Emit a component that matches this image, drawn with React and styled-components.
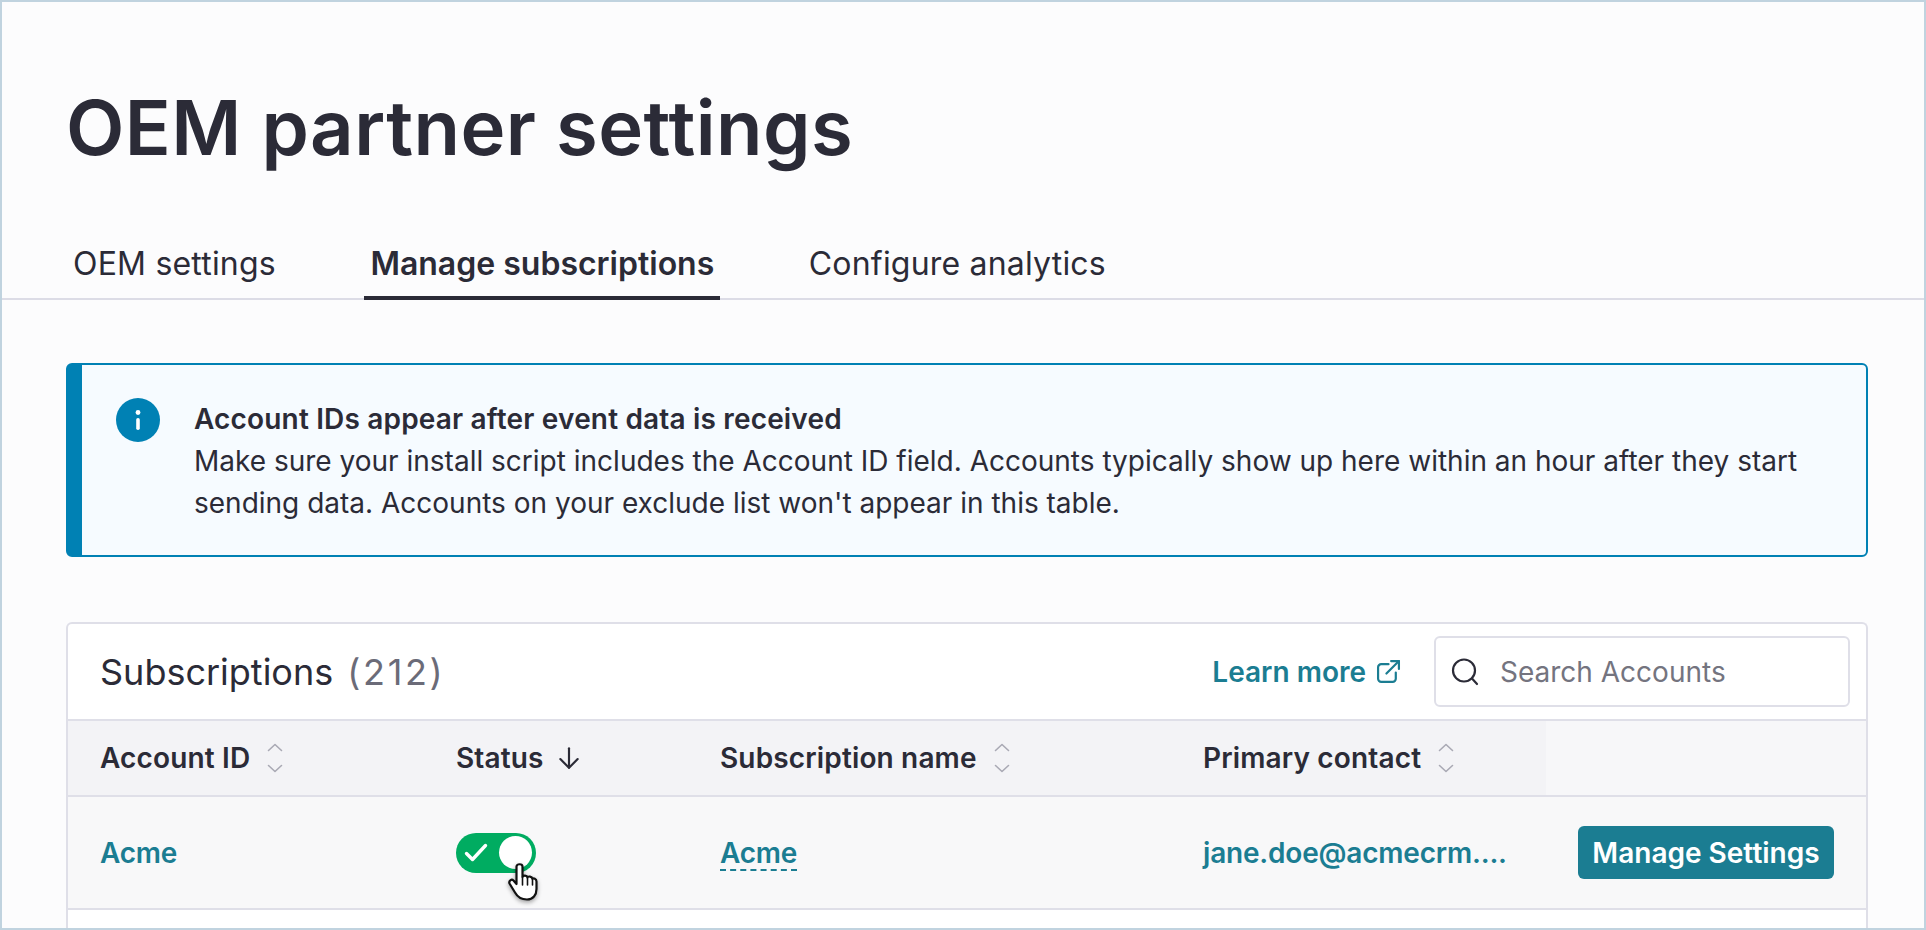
import styled, { createGlobalStyle } from 'styled-components'

const Global = createGlobalStyle`
html, body {
  margin: 0;
  padding: 0;
  background: #fff;
}
* {
  box-sizing: border-box;
}
`

function SortIcon() {
  return (
    <SortSvg width="18" height="32" viewBox="0 0 18 32" fill="none" stroke="#a9a9b4" strokeWidth="1.6" strokeLinecap="round" strokeLinejoin="round">
      <path d="M2.5 8.5 9 2.5l6.5 6" />
      <path d="M2.5 23.5 9 29.5l6.5-6" />
    </SortSvg>
  )
}

function HandCursor() {
  return (
    <Cursor width="30" height="38" viewBox="0 0 30 38">
      <path
        d="M8.500 3.500C8.500.5 14.500.5 14.500 3.500V14C15 12 19 12 19.500 14.500 20 13 24 13 24.500 16 25.500 15 28.500 15.500 28.500 18.500V26C28.500 32 25 36.500 19 36.500 13 36.500 9.500 34 7 29.500L1.500 20.500C.5 18 3.500 15.500 5.500 17.500L8.500 21Z"
        fill="#fff"
        stroke="#111"
        strokeWidth="2.200"
        strokeLinejoin="round"
      />
      <path d="M14.500 14v8M19.500 15v7M24.500 17v5" stroke="#111" strokeWidth="1.600" strokeLinecap="round" />
    </Cursor>
  )
}

const columns = [
  { label: 'Account ID', sort: true },
  { label: 'Status', arrow: true },
  { label: 'Subscription name', sort: true },
  { label: 'Primary contact', sort: true },
]

function App() {
  return (
    <Frame>
      <Global />
      <Title>OEM partner settings</Title>

      <Tabs>
        <Tab>OEM settings</Tab>
        <Tab $active>Manage subscriptions</Tab>
        <Tab>Configure analytics</Tab>
      </Tabs>

      <Content>
        <Banner>
          <InfoIcon width="44" height="44" viewBox="0 0 44 44">
            <circle cx="22" cy="22" r="22" fill="#0081b4" />
            <circle cx="22" cy="14.500" r="2.400" fill="#fff" />
            <rect x="20.200" y="20" width="3.600" height="12" rx="1.800" fill="#fff" />
          </InfoIcon>
          <BannerText>
            <BannerHeading>Account IDs appear after event data is received</BannerHeading>
            <BannerBody>
              Make sure your install script includes the Account ID field. Accounts typically show up here within an hour after they start
              sending data. Accounts on your exclude list won't appear in this table.
            </BannerBody>
          </BannerText>
        </Banner>

        <Card>
          <CardHeader>
            <CardTitle>
              Subscriptions <Count>(212)</Count>
            </CardTitle>
            <LearnMore>
              Learn more
              <svg width="25" height="25" viewBox="0 0 24 24" fill="none" stroke="#1b7d92" strokeWidth="2.100" strokeLinecap="round" strokeLinejoin="round">
                <path d="M12 5H5a3 3 0 0 0-3 3v11a3 3 0 0 0 3 3h11a3 3 0 0 0 3-3v-6" />
                <path d="M10 14 22 2" />
                <path d="M14.500 2H22v7.500" />
              </svg>
            </LearnMore>
            <Search>
              <svg width="28" height="28" viewBox="0 0 28 28" fill="none" stroke="#2b2b37" strokeWidth="2.200" strokeLinecap="round">
                <circle cx="13" cy="12.500" r="11" />
                <path d="m21 20.500 5 5.500" />
              </svg>
              <SearchInput placeholder="Search Accounts" />
            </Search>
          </CardHeader>

          <HeadRow>
            {columns.map((c) => (
              <HeadCell key={c.label}>
                {c.label}
                {c.sort && <SortIcon />}
                {c.arrow && (
                  <ArrowSvg width="26" height="26" viewBox="0 0 24 24" fill="none" stroke="#2b2b37" strokeWidth="2" strokeLinecap="round" strokeLinejoin="round">
                    <path d="M12 3v18" />
                    <path d="m4 13 8 8 8-8" />
                  </ArrowSvg>
                )}
              </HeadCell>
            ))}
            <ActionsHead />
          </HeadRow>

          <Row>
            <Cell>
              <RowLink>Acme</RowLink>
            </Cell>
            <Cell>
              <Toggle>
                <svg width="26" height="22" viewBox="0 0 26 22" fill="none" stroke="#fff" strokeWidth="3.400" strokeLinecap="round" strokeLinejoin="round">
                  <path d="m3.500 11.500 6 6 13-14" />
                </svg>
                <Knob />
                <HandCursor />
              </Toggle>
            </Cell>
            <Cell>
              <DashedLink>Acme</DashedLink>
            </Cell>
            <Cell>
              <RowLink>jane.doe@acmecrm....</RowLink>
            </Cell>
            <ActionCell>
              <Button>Manage Settings</Button>
            </ActionCell>
          </Row>
        </Card>
      </Content>
    </Frame>
  )
}

const Frame = styled.div`
height: 930px;
overflow: hidden;
border: 2px solid #c0d3df;
background: #fcfcfd;
font-family: Inter, "Liberation Sans", sans-serif;
color: #2b2b37;
`

const Title = styled.h1`
margin: 0;
padding: 80px 0 0 64px;
height: 222px;
font-size: 76px;
line-height: 90px;
font-weight: 600;
letter-spacing: 0.45px;
`

const Tabs = styled.div`
display: flex;
height: 76px;
padding-left: 65px;
gap: 82.5px;
border-bottom: 2px solid #dcdce6;
`

const Tab = styled.div`
height: 76px;
padding: 18px 6px 0;
font-size: 32px;
line-height: 44px;
font-weight: ${(p) => (p.$active ? 600 : 400)};
letter-spacing: ${(p) => (p.$active ? 0 : '0.2px')};
border-bottom: ${(p) => (p.$active ? '4px solid #2b2b37' : 'none')};
`

const Content = styled.div`
padding: 63px 56px 0 64px;
`

const Banner = styled.div`
display: flex;
height: 194px;
padding: 33px 32px 0 34px;
gap: 34px;
background: #f6fbff;
border: 2px solid #0081b4;
border-left-width: 16px;
border-radius: 6px;
`

const InfoIcon = styled.svg`
flex: none;
`

const BannerText = styled.div`
font-size: 28px;
line-height: 42px;
`

const BannerHeading = styled.div`
font-weight: 600;
letter-spacing: 0.17px;
`

const BannerBody = styled.div`
font-weight: 400;
`

const Card = styled.div`
margin-top: 65px;
height: 400px;
background: #fff;
border: 2px solid #dfdfe8;
border-bottom: none;
border-radius: 6px 6px 0 0;
`

const CardHeader = styled.div`
display: flex;
align-items: center;
height: 95px;
padding: 0 16px 0 32px;
`

const CardTitle = styled.div`
flex: 1;
font-size: 36px;
font-weight: 400;
`

const Count = styled.span`
margin-left: 4px;
color: #6b6b78;
letter-spacing: 2.6px;
`

const LearnMore = styled.a`
display: flex;
align-items: center;
gap: 10px;
margin-right: 33px;
font-size: 28px;
font-weight: 600;
color: #1b7d92;
`

const Search = styled.div`
display: flex;
align-items: center;
gap: 21px;
width: 416px;
height: 71px;
padding: 0 15px;
background: #fff;
border: 2px solid #dfdfe8;
border-radius: 6px;
`

const SearchInput = styled.input`
flex: 1;
min-width: 0;
padding: 0;
border: none;
outline: none;
background: transparent;
font: 400 28px Inter, "Liberation Sans", sans-serif;

&::placeholder {
  color: #74747f;
  opacity: 1;
}
`

const grid = `
display: grid;
grid-template-columns: 356px 264px 483px 375px 1fr;
`

const HeadRow = styled.div`
${grid}
height: 78px;
background: #f3f3f6;
border-top: 2px solid #dfdfe8;
border-bottom: 2px solid #dfdfe8;
`

const HeadCell = styled.div`
display: flex;
align-items: center;
gap: 16px;
padding-left: 32px;
font-size: 28px;
font-weight: 600;
letter-spacing: 0.15px;
`

const SortSvg = styled.svg`
flex: none;
`

const ArrowSvg = styled.svg`
flex: none;
margin-left: -4px;
`

const ActionsHead = styled.div`
background: #f7f7f9;
`

const Row = styled.div`
${grid}
height: 113px;
background: #f8f8f9;
border-bottom: 2px solid #dfdfe8;
`

const Cell = styled.div`
display: flex;
align-items: center;
padding-left: 32px;
`

const ActionCell = styled.div`
display: flex;
align-items: center;
justify-content: flex-end;
padding-right: 32px;
`

const RowLink = styled.a`
font-size: 28px;
font-weight: 600;
letter-spacing: -0.2px;
color: #1b7d92;
`

const DashedLink = styled(RowLink)`
text-decoration: underline dashed 2px #1b7d92;
text-underline-offset: 7px;
`

const Toggle = styled.div`
position: relative;
display: flex;
align-items: center;
justify-content: space-between;
width: 80px;
height: 40px;
padding: 0 4px 0 7px;
background: #00ac61;
border-radius: 20px;
`

const Knob = styled.div`
width: 33px;
height: 33px;
background: #fff;
border-radius: 50%;
`

const Cursor = styled.svg`
position: absolute;
left: 52px;
top: 30px;
filter: drop-shadow(0 2px 2px rgba(0, 0, 0, 0.35));
`

const Button = styled.button`
width: 256px;
height: 53px;
padding: 0;
border: none;
border-radius: 6px;
background: #1b7d92;
color: #fff;
font: 600 28px Inter, "Liberation Sans", sans-serif;
letter-spacing: 0;
`

export default App
